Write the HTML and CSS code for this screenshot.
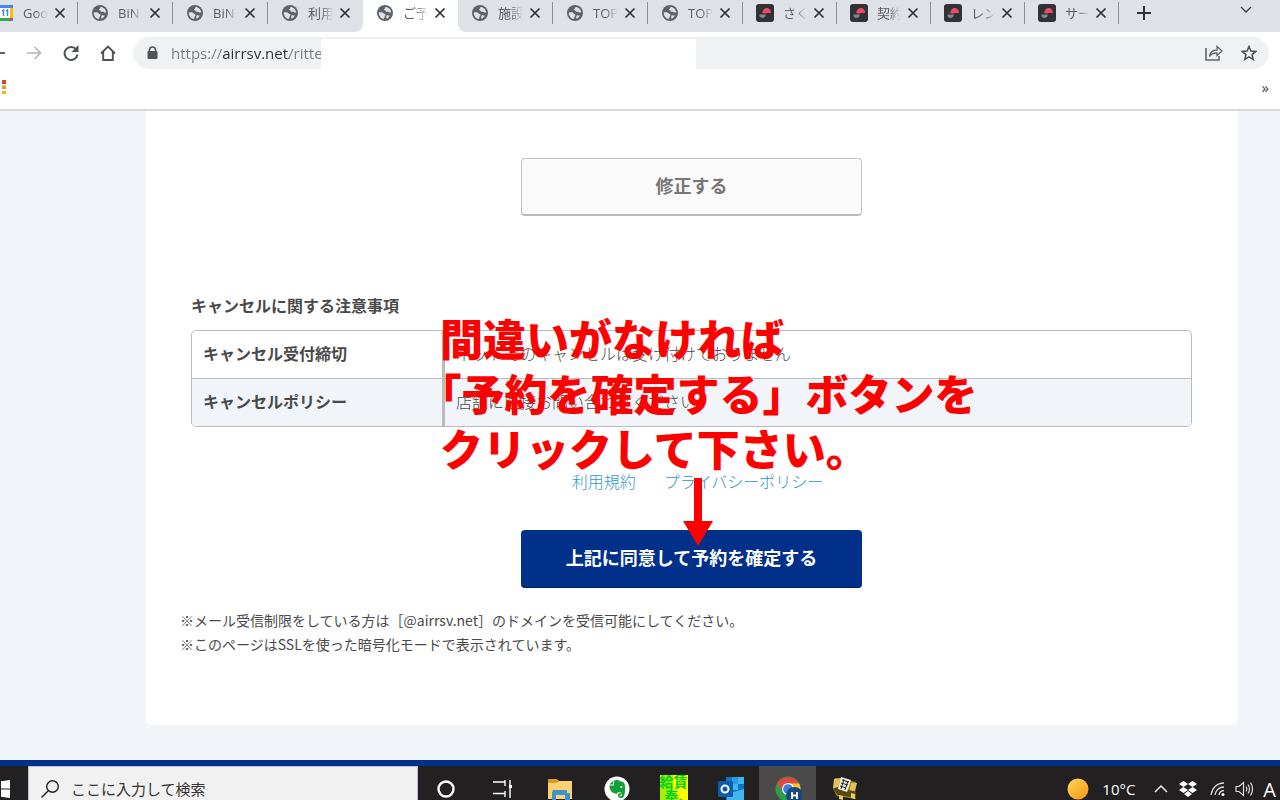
FILE: index.html
```
<!DOCTYPE html>
<html lang="ja">
<head>
  <meta charset="UTF-8" />
  <meta name="viewport" content="width=device-width, initial-scale=1.0" />
  <title>ご予約内容の確認</title>
  <link rel="stylesheet" href="styles.css">
</head>
<body>

  <!-- shared icons -->
  <svg class="defs" aria-hidden="true">
    <symbol id="globe" viewBox="0 0 16 16">
      <circle cx="8" cy="8" r="8" fill="#5f6368"/>
      <path d="M1.800 7.500c2-.3 4-.2 4.700.8.500.8 1.800.5 2 1.500.1 1-1 1.300-1 2.300 0 .8-.3 1.500-1 1.900C3.800 13.300 1.600 10.800 1.800 7.500z" fill="#dee1e6"/>
      <path d="M8.500 1.900c2.800 0 5.300 2.300 5.700 5.200-.8.800-1.800.6-2.400 0-.6-.5-1.500-.2-2.300-.3-1-.2-.8-1.300-1.800-1.600-.9-.4-.7-1.200 0-1.500.7-.4.300-1.100.800-1.800z" fill="#dee1e6"/>
      <path d="M10 10.300c1-.3 1.800.3 2.800.2-.7 1.500-1.900 2.700-3.300 3.300-.3-1.200-.6-2.800.5-3.500z" fill="#dee1e6"/>
    </symbol>
    <symbol id="sakura" viewBox="0 0 18 18">
      <rect width="18" height="18" rx="3" fill="#303236"/>
      <path d="M6 8.500C7 7 7.500 4 10.500 4c2.500 0 4.500 1.500 4.500 5h-4.500c-1 1-3.500.5-4.500-.5z" fill="#f0486c"/>
      <path d="M3.500 10.500h6c.5 2-1 3.500-3 3.500s-3.500-1.500-3-3.500z" fill="#83868a"/>
    </symbol>
    <symbol id="x" viewBox="0 0 12 12">
      <path d="M1.500 1.500l9 9M10.500 1.500l-9 9" stroke="#303134" stroke-width="1.700" fill="none"/>
    </symbol>
  </svg>

  <!-- TABS -->
  <div class="tabs">
    <div class="tab">
      <svg class="fav" viewBox="0 0 16 16"><path d="M0 0h16v16H0z" fill="#4285f4"/><path d="M13 3h3v10h-3z" fill="#fbbc04"/><path d="M0 13h13v3H0z" fill="#34a853"/><path d="M13 13h3l-3 3z" fill="#ea4335"/><path d="M3 3h10v10H3z" fill="#fff"/><path d="M5 6l1.500-1v6M9 6l1.500-1v6" stroke="#4285f4" stroke-width="1.500" fill="none"/></svg>
      <span class="name">Goo</span>
      <button class="close" aria-label="閉じる"><svg><use href="#x"/></svg></button>
    </div>
    <div class="tab"><svg class="fav"><use href="#globe"/></svg><span class="name">BiN</span><button class="close" aria-label="閉じる"><svg><use href="#x"/></svg></button></div>
    <div class="tab"><svg class="fav"><use href="#globe"/></svg><span class="name">BiN</span><button class="close" aria-label="閉じる"><svg><use href="#x"/></svg></button></div>
    <div class="tab before"><svg class="fav"><use href="#globe"/></svg><span class="name">利用</span><button class="close" aria-label="閉じる"><svg><use href="#x"/></svg></button></div>
    <div class="tab active"><svg class="fav"><use href="#globe"/></svg><span class="name">ご予</span><button class="close" aria-label="閉じる"><svg><use href="#x"/></svg></button></div>
    <div class="tab after"><svg class="fav"><use href="#globe"/></svg><span class="name">施設</span><button class="close" aria-label="閉じる"><svg><use href="#x"/></svg></button></div>
    <div class="tab"><svg class="fav"><use href="#globe"/></svg><span class="name">TOP</span><button class="close" aria-label="閉じる"><svg><use href="#x"/></svg></button></div>
    <div class="tab"><svg class="fav"><use href="#globe"/></svg><span class="name">TOP</span><button class="close" aria-label="閉じる"><svg><use href="#x"/></svg></button></div>
    <div class="tab dark"><svg class="fav"><use href="#sakura"/></svg><span class="name">さく</span><button class="close" aria-label="閉じる"><svg><use href="#x"/></svg></button></div>
    <div class="tab dark"><svg class="fav"><use href="#sakura"/></svg><span class="name">契約</span><button class="close" aria-label="閉じる"><svg><use href="#x"/></svg></button></div>
    <div class="tab dark"><svg class="fav"><use href="#sakura"/></svg><span class="name">レン</span><button class="close" aria-label="閉じる"><svg><use href="#x"/></svg></button></div>
    <div class="tab dark"><svg class="fav"><use href="#sakura"/></svg><span class="name">サー</span><button class="close" aria-label="閉じる"><svg><use href="#x"/></svg></button></div>
    <button class="new-tab" aria-label="新しいタブ"><svg viewBox="0 0 14 14"><path d="M7 0v14M0 7h14" stroke="#303134" stroke-width="2"/></svg></button>
    <button class="tab-search" aria-label="タブを検索"><svg viewBox="0 0 12 8"><path d="M1 1l5 5 5-5" stroke="#3c4043" stroke-width="1.300" fill="none"/></svg></button>
  </div>

  <!-- TOOLBAR -->
  <div class="toolbar">
    <button class="tool" aria-label="戻る"><svg viewBox="0 0 16 16"><path d="M16 8H2M8 2L2 8l6 6" stroke="#5f6368" stroke-width="2" fill="none"/></svg></button>
    <button class="tool" aria-label="進む"><svg viewBox="0 0 16 16"><path d="M1 8h13M8.500 2l6 6-6 6" stroke="#b4b6b9" stroke-width="1.600" fill="none"/></svg></button>
    <button class="tool" aria-label="再読み込み"><svg viewBox="0 0 16 16"><path d="M13.300 4.500A6.500 6.500 0 1 0 14.500 9.500" stroke="#4d5156" stroke-width="2" fill="none"/><path d="M15.500 0v7h-7z" fill="#4d5156"/></svg></button>
    <button class="tool" aria-label="ホーム"><svg viewBox="0 0 16 16"><path d="M1 8.500L8 1.500l7 7M3.200 7v8h9.600V7" stroke="#4d5156" stroke-width="1.900" fill="none"/></svg></button>
    <div class="address">
      <svg class="lock" viewBox="0 0 11 14"><path d="M2.500 6V4a3 3 0 0 1 6 0v2" stroke="#505357" stroke-width="1.600" fill="none"/><rect x="0.500" y="5" width="10" height="8" rx="1" fill="#505357"/></svg>
      <input class="url" type="text" aria-label="アドレス" value="https://airrsv.net/ritte">
      <div class="blank"></div>
      <button class="share" aria-label="共有"><svg viewBox="0 0 18 16"><path d="M1 3v12h13v-4" stroke="#5f6368" stroke-width="1.600" fill="none"/><path d="M4.500 11.500C5 7 8 5 12 5V1.500L17 6l-5 4.500V8C8.500 7.800 6 9 4.500 11.500z" stroke="#5f6368" stroke-width="1.300" fill="none"/></svg></button>
      <button class="star" aria-label="ブックマーク"><svg viewBox="0 0 16 16"><path d="M8 1.500l1.900 4.500 4.900.4-3.700 3.200 1.100 4.800L8 11.900l-4.200 2.500 1.100-4.800L1.200 6.400l4.900-.4z" stroke="#4d5156" stroke-width="1.600" fill="none"/></svg></button>
    </div>
  </div>
  <div class="bookmarks">
    <svg class="dots" viewBox="0 0 4 14"><path d="M0 0h4v4H0z" fill="#d0473a"/><path d="M0 5.500h4v3.500H0z" fill="#e39a35"/><path d="M0 11h4v3H0z" fill="#e8b52c"/></svg>
    <button class="more" aria-label="他のブックマーク">»</button>
  </div>

  <!-- PAGE -->
  <main class="page">
    <div class="card">
      <button class="btn edit">修正する</button>

      <h2>キャンセルに関する注意事項</h2>
      <table class="policy">
        <tr><th scope="row">キャンセル受付締切</th><td>ネットでのキャンセルは受け付けておりません</td></tr>
        <tr><th scope="row">キャンセルポリシー</th><td>店舗に直接お問い合わせください</td></tr>
      </table>

      <nav class="links">
        <a href="#">利用規約</a>
        <a href="#">プライバシーポリシー</a>
      </nav>

      <button class="btn confirm">上記に同意して予約を確定する</button>

      <div class="notes">
        <p>※メール受信制限をしている方は［@airrsv.net］のドメインを受信可能にしてください。</p>
        <p>※このページはSSLを使った暗号化モードで表示されています。</p>
      </div>

      <!-- red guide text over the page -->
      <div class="guide">
        <p>間違いがなければ</p>
        <p>「予約を確定する」ボタンを</p>
        <p>クリックして下さい。</p>
        <svg viewBox="0 0 30 68"><path d="M11 0h8v43h11L15 68 0 43h11z" fill="#f00"/></svg>
      </div>
    </div>
  </main>

  <!-- TASKBAR -->
  <div class="taskbar">
    <button class="start" aria-label="スタート"><svg viewBox="0 0 18 18"><path d="M0 2.500L8 1.400v7.100H0zM9 1.200L18 0v8.500H9zM0 9.500h8v7.100L0 15.500zM9 9.500h9V18L9 16.800z" fill="#fff"/></svg></button>
    <label class="search">
      <svg viewBox="0 0 18 18"><circle cx="11.500" cy="6.500" r="5.800" stroke="#222" stroke-width="1.400" fill="none"/><path d="M7.300 10.700L0.500 17.500" stroke="#222" stroke-width="1.400"/></svg>
      <input type="text" aria-label="検索" placeholder="ここに入力して検索">
    </label>
    <button class="app" aria-label="Cortana"><svg viewBox="0 0 28 28"><circle cx="14" cy="14" r="7.500" stroke="#fff" stroke-width="2.400" fill="none"/></svg></button>
    <button class="app" aria-label="タスクビュー"><svg viewBox="0 0 28 28"><path d="M4 7h12M16 5v6M16 16v6M4 18.500h12M21 5v18" stroke="#fff" stroke-width="1.400" fill="none"/><path d="M20 10h3v3h-3z" fill="#fff"/></svg></button>
    <button class="app" aria-label="エクスプローラー"><svg viewBox="0 0 28 28"><path d="M2 4h9l2 2h13v5H2z" fill="#d99a28"/><path d="M2 8h9l2-2h13v18H2z" fill="#fcd271"/><path d="M7 15h14v3h3v7h-5v-5H10v5H6v-7z" fill="#3d93cf"/></svg></button>
    <button class="app" aria-label="Evernote"><svg viewBox="0 0 28 28"><circle cx="14" cy="14" r="12.500" fill="#fff"/><path d="M6.500 10.500h4.500V5.500c2.500-1 5-.5 6 .7 2.500.2 4.500.8 4.800 3.300.6 4.500.4 10-1.300 12.500-1 1.500-5.500 1.500-5.500-1.500 0-2.200 1.800-2.700 3.200-2.300v1.500c-1 0-1.500.3-1.500 1 0 .8 1.800.5 2 0 .3-1 0-2.700-1-3.200-1.700-.6-3.200-.3-3.700 1.200C9 18.700 6.500 15.500 6.500 10.500z" fill="#14a038"/><path d="M6.500 9.500L10 5.700v3.800z" fill="#14a038"/><circle cx="18.300" cy="12" r="1" fill="#fff"/></svg></button>
    <button class="app"><span class="kyu">給賃奉.</span></button>
    <button class="app" aria-label="Outlook"><svg viewBox="0 0 28 28"><path d="M9 2h18v23H9z" fill="#1272c4"/><path d="M15 2h6v7h-6z" fill="#2a9be6"/><path d="M21 2h6v7h-6zM15 9h6v6h-6z" fill="#3fb7f2"/><path d="M10 19l17-5v11H10z" fill="#44b5ee"/><rect x="1" y="6" width="15" height="16" rx="1.500" fill="#0b5cab"/><circle cx="8" cy="14" r="3.500" stroke="#fff" stroke-width="2" fill="none"/></svg></button>
    <button class="app current" aria-label="Chrome"><svg viewBox="0 0 28 28"><circle cx="14" cy="14" r="12.500" fill="#2f9e4c"/><path d="M3 8.500a12.500 12.500 0 0 1 22 0H14a6 6 0 0 0-5.500 7.500z" fill="#e2483d"/><path d="M14 8.500h11.200A12.500 12.500 0 0 1 15 26.500z" fill="#fbc22d"/><circle cx="14" cy="14" r="6" fill="#fff"/><circle cx="14" cy="14" r="4.800" fill="#3b7de0"/><circle cx="20.500" cy="20.500" r="8.500" fill="#184a7d"/><path d="M18 17v7M23 17v7M18 20.500h5" stroke="#fff" stroke-width="1.800"/></svg></button>
    <button class="app" aria-label="ツール"><svg viewBox="0 0 28 28"><path d="M4 3l21 4-1 8 1 9-19-3-4-7z" fill="#a98b24"/><path d="M2 14l4-2 19 5v6l-18-3z" fill="#574710"/><path d="M3 4l7-1-3 9-5 1zM20 8l6 0-2 8-5-1z" fill="#dfc358"/><path d="M10 2l10 3-4 12-9-3z" fill="#f3f0e4"/><path d="M11 5l7 2M10 8l7 2M9 11l6 2M13 4l-3 10M17 6l-3 9" stroke="#222" stroke-width="1"/><path d="M8 20l4 1v4l-4-1zM20 18l4 1v5l-4-1z" fill="#e6cd62"/></svg></button>

    <div class="tray">
      <svg class="sun" viewBox="0 0 22 22"><defs><linearGradient id="sunny" x1="0" y1="0" x2="1" y2="1"><stop offset="0" stop-color="#ffd75a"/><stop offset="1" stop-color="#f79412"/></linearGradient></defs><circle cx="11" cy="11" r="10.500" fill="url(#sunny)"/></svg>
      <span class="temp">10°C</span>
      <svg class="up" viewBox="0 0 14 8"><path d="M1 7l6-6 6 6" stroke="#fff" stroke-width="1.400" fill="none"/></svg>
      <svg class="box" viewBox="0 0 18 16"><path d="M4.500 0L9 3 4.500 6 0 3zM13.500 0L18 3l-4.500 3L9 3zM4.500 6L9 9l-4.500 3L0 9zM13.500 6L18 9l-4.500 3L9 9zM9 10l4 3-4 3-4-3z" fill="#fff"/></svg>
      <svg class="wifi" viewBox="0 0 16 16"><path d="M1 14C2 7 7 2 14 2M5 14c.5-4.500 4-8 9-8M9 14c.3-2.500 2.500-4.300 5-4.500" stroke="#ddd" stroke-width="1.300" fill="none"/><circle cx="13" cy="13.500" r="1.500" fill="#fff"/></svg>
      <svg class="vol" viewBox="0 0 18 16"><path d="M1 5.500h3L8.500 1.500v13L4 10.500H1zM11 5.500c1 1.500 1 3.500 0 5M13 3.500c2 2.500 2 6.500 0 9M15.500 1.500c2.500 4 2.500 9 0 13" stroke="#ddd" stroke-width="1.200" fill="none"/></svg>
      <span class="ime">A</span>
    </div>
  </div>

</body>
</html>
```

FILE: styles.css
```
* { box-sizing: border-box; }
body {
  margin: 0;
  height: 100vh;
  overflow: hidden;
  background: #f1f5f9;
  color: #4a4a4a;
  font-family: "Open Sans", "Noto Sans CJK JP", sans-serif;
  display: flex;
  flex-direction: column;
}
body > * { flex-shrink: 0; }
p, h2 { margin: 0; }
button {
  border: none;
  background: none;
  padding: 0;
  font-family: inherit;
  cursor: pointer;
}
input {
  border: none;
  outline: none;
  background: none;
  padding: 0;
  font-family: inherit;
}
svg { display: block; }
.defs { position: absolute; width: 0; height: 0; }

/* tabs */
.tabs {
  display: flex;
  height: 32px;
  background: #dee1e6;
  padding-right: 28px;
}
.tab {
  flex: 0 0 95px;
  min-width: 0;
  display: flex;
  align-items: center;
  padding: 0 12px 6px 14px;
  background: linear-gradient(#8a8d91, #8a8d91) right 2px / 1px 22px no-repeat #dee1e6;
}
.tab:first-child { margin-left: -17px; }
.tab.before { background: #dee1e6; border-radius: 0 0 8px 0; }
.tab.after { border-radius: 0 0 0 8px; }
.tab.active {
  background: #fff;
  box-shadow: -8px 0 #fff, 8px 0 #fff;
}
.tab.before, .tab.after { z-index: 1; }
.fav { width: 16px; height: 16px; flex: none; }
.name {
  flex: 1;
  min-width: 0;
  margin: 0 6px 0 10px;
  overflow: hidden;
  white-space: nowrap;
  font-size: 13px;
  line-height: 20px;
  color: #5a5d61;
  mask-image: linear-gradient(90deg, #000 50%, transparent);
}
.tab.dark { padding-left: 13px; flex-basis: 94px; }
.dark .fav { width: 18px; height: 18px; }
.dark .name { margin-left: 9px; }
.close svg { width: 12px; height: 12px; }
.new-tab { padding: 0 18px 7px; }
.new-tab svg { width: 14px; height: 14px; }
.tab-search { margin-left: auto; padding-bottom: 12px; }
.tab-search svg { width: 12px; height: 8px; }

/* toolbar */
.toolbar {
  display: flex;
  align-items: center;
  height: 41px;
  background: #fff;
  padding-right: 11px;
}
.tool { width: 37px; }
.tool:first-child { margin-left: -22px; }
.tool svg { width: 16px; height: 16px; margin: 0 auto; }
.address {
  flex: 1;
  display: flex;
  align-items: center;
  height: 32px;
  margin-left: 7px;
  padding: 0 12px 0 14px;
  border-radius: 16px;
  background: #f0f1f3;
}
.lock { width: 11px; height: 14px; margin-right: 13px; }
.url {
  width: 150px;
  height: 28px;
  font-size: 15px;
  color: transparent;
  background: linear-gradient(90deg, #777a7e 52px, #2b2d30 52px, #2b2d30 118px, #777a7e 118px);
  -webkit-background-clip: text;
  background-clip: text;
}
.blank {
  width: 375px;
  height: 30px;
  align-self: flex-end;
  border-radius: 3px 0 0 0;
  background: #fff;
}
.share { margin-left: auto; margin-right: 18px; }
.share svg { width: 18px; height: 16px; }
.star svg { width: 16px; height: 16px; }
.bookmarks {
  display: flex;
  align-items: center;
  justify-content: space-between;
  height: 38px;
  padding: 0 11px 8px 2px;
  background: #fff;
  border-bottom: 2px solid #d9dadc;
}
.dots { width: 4px; height: 14px; }
.more { font-size: 15px; line-height: 20px; color: #3c4043; }

/* page */
.page { padding: 0 42px 35px 146px; }
.card {
  position: relative;
  display: flex;
  flex-direction: column;
  padding: 47px 46px 69px 45px;
  background: #fff;
  border-radius: 0 0 5px 5px;
}
.btn {
  align-self: center;
  width: 341px;
  height: 58px;
  border-radius: 4px;
  padding-bottom: 3px;
  font-size: 18px;
  font-weight: bold;
}
.edit {
  color: #777;
  background: #fafafa;
  border: 1px solid #c4c4c4;
  border-bottom: 2px solid #b8babc;
}
.confirm {
  color: #fff;
  background: #00308a;
  border-bottom: 1px solid #001f5c;
}
.card h2 {
  margin: 78px 0 12px;
  font-size: 16px;
  line-height: 24px;
}
.policy {
  width: 100%;
  border: 1px solid #bbb;
  border-radius: 5px;
  border-spacing: 0;
  font-size: 16px;
  line-height: 24px;
  overflow: hidden;
}
.policy th {
  width: 253px;
  padding: 11px 11px 12px;
  text-align: left;
  border-right: 3px solid #bbb;
}
.policy td { padding: 11px 11px 12px; font-weight: 300; }
.policy tr + tr { background: #f1f5fa; }
.policy tr + tr th, .policy tr + tr td { border-top: 1px solid #bbb; }
.links {
  display: flex;
  justify-content: center;
  gap: 28px;
  margin: 43px 0 36px;
  padding-left: 12px;
  font-size: 16px;
  font-weight: 300;
  line-height: 24px;
}
.links a { color: #2f97c8; text-decoration: none; }
.notes {
  margin: 20px 0 0 -11px;
  font-size: 14px;
  line-height: 24px;
  font-family: "Noto Sans CJK JP", sans-serif;
}

.guide {
  position: absolute;
  top: 199px;
  left: 294px;
  color: #f00;
  font-family: "Noto Sans CJK JP", sans-serif;
  font-size: 43px;
  font-weight: 900;
  line-height: 55px;
  white-space: nowrap;
  text-spacing-trim: trim-start;
  pointer-events: none;
}
.guide svg { width: 30px; height: 68px; margin: 3px 0 0 243px; }

/* taskbar */
.taskbar {
  display: flex;
  height: 52px;
  border-top: 6px solid #003087;
  background: #222021;
}
.start { width: 55px; margin-left: -27px; }
.start svg { width: 18px; height: 18px; margin: 0 auto; }
.search {
  display: flex;
  align-items: center;
  gap: 12px;
  width: 390px;
  margin-right: -1px;
  padding-left: 12px;
  background: #f1f1f1;
  border: 1px solid #b8c2d4;
}
.search svg { width: 18px; height: 18px; }
.search input { flex: 1; font-size: 15px; line-height: 24px; }
.search input::placeholder { color: #333; }
.app { width: 57px; }
.app svg { width: 28px; height: 28px; margin: 0 auto; }
.app.current { background: #4a4a4b; }
.kyu {
  display: block;
  width: 28px;
  height: 28px;
  margin: 0 auto;
  overflow: hidden;
  background: linear-gradient(90deg, #a6f000 45%, #ff0 45%);
  color: #00d21c;
  font-size: 14px;
  font-weight: bold;
  line-height: 14px;
  word-break: break-all;
}
.tray {
  display: flex;
  align-items: center;
  margin-left: auto;
  padding-right: 4px;
  color: #fff;
}
.sun { width: 22px; height: 22px; }
.temp { margin: 0 19px 0 13px; font-size: 15px; }
.up { width: 14px; height: 8px; margin-right: 11px; }
.box { width: 18px; height: 16px; margin-right: 13px; }
.wifi { width: 16px; height: 16px; margin-right: 9px; }
.vol { width: 18px; height: 16px; margin-right: 10px; }
.ime { font-size: 20px; }
```
